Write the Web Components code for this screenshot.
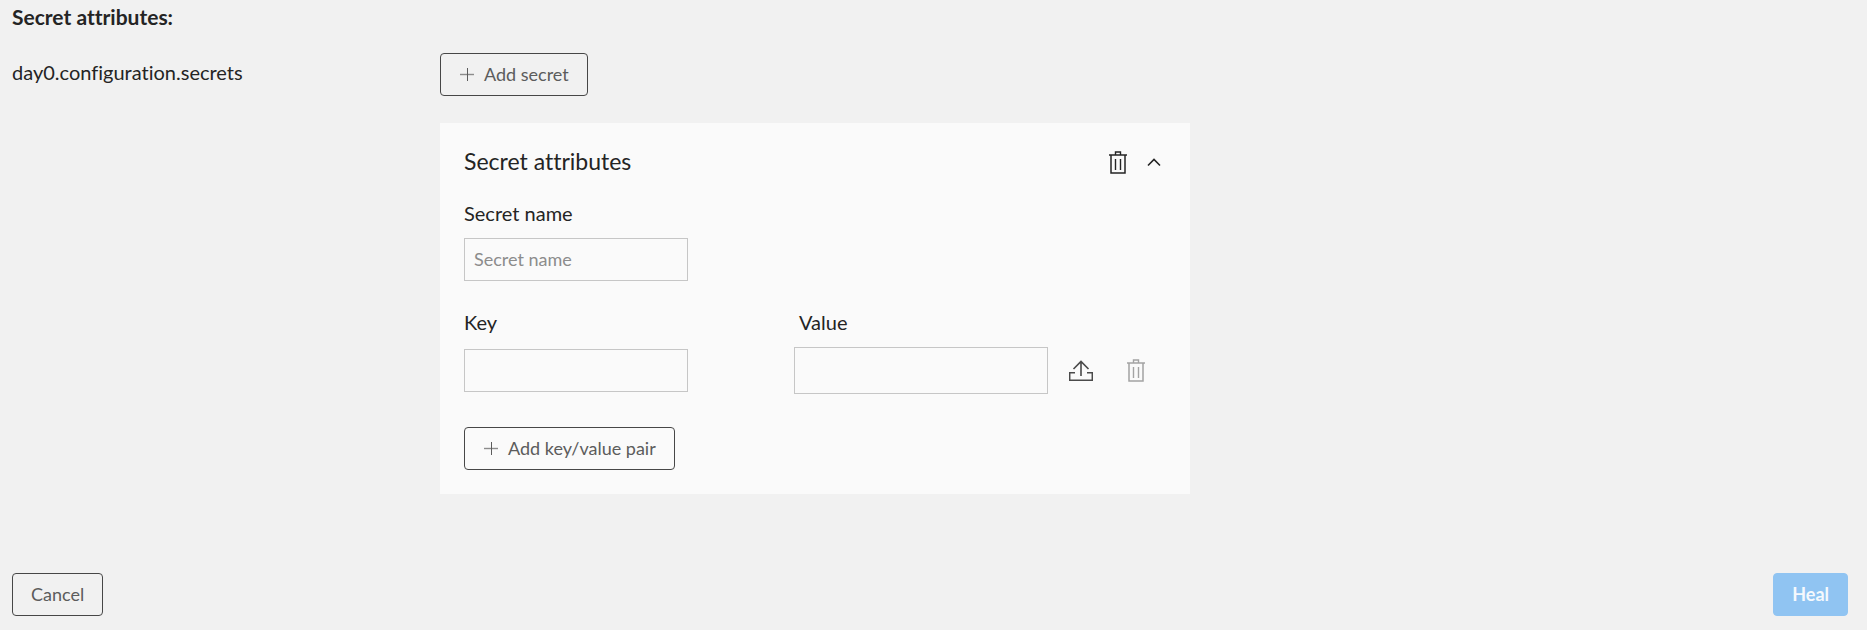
<!DOCTYPE html>
<html lang="en">
<head>
<meta charset="utf-8">
<meta name="viewport" content="width=device-width, initial-scale=1">
<title>Heal – Secret attributes</title>
<style>
  body { margin: 0; background: #f1f1f1; color: #242424; font: 20px/24px Lato, "Open Sans", sans-serif; font-variant-ligatures: none; }
</style>
</head>
<body>
<heal-page></heal-page>
<script>
const define = (name, html, setup) => {
  const template = document.createElement('template');
  template.innerHTML = html;
  customElements.define(name, class extends HTMLElement {
    constructor() {
      super();
      this.attachShadow({ mode: 'open' }).append(template.content.cloneNode(true));
    }
    connectedCallback() { if (setup) setup(this, this.shadowRoot); }
  });
};

const icons = {
  plus: [16, 16, '<path d="M1 7.5h14" stroke="#8c8c8c" stroke-width="1.4"/><path d="M8.5 1v13"/>'],
  trash: [18, 23, '<path d="M0 4h18" stroke-width="1.5"/><path d="M6.5 4V1h5v3" stroke-width="1.4"/><path d="M2 4v18h14V4" stroke-width="1.5"/><path d="M6.5 8v11M11.5 8v11" stroke-width="1.4"/>'],
  up: [14, 9, '<path d="M1 7.500l6-6 6 6" stroke-width="1.6"/>'],
  upload: [24, 22, '<path d="M6 12.700H.7v7.600h22.600v-7.600H18" stroke-width="1.5"/><path d="M12 16V1M4.500 9L12 1.500 19.500 9" stroke-width="1.6"/>']
};

define('line-icon', `
<style>:host { display: inline-flex; flex: none; } svg { display: block; fill: none; stroke: currentColor; }</style>
<svg aria-hidden="true"></svg>`, (host, root) => {
  const [w, h, shape] = icons[host.getAttribute('name')];
  const svg = root.querySelector('svg');
  svg.setAttribute('viewBox', `0 0 ${w} ${h}`);
  svg.setAttribute('width', w);
  svg.setAttribute('height', h);
  svg.innerHTML = shape;
});

define('action-button', `
<style>
  :host { display: inline-block; }
  button { box-sizing: border-box; display: flex; align-items: center; gap: 9px; height: 43px; padding: 0 18px;
    border: 1px solid #474747; border-radius: 4px; background: transparent; color: #5c5c5c;
    font: inherit; font-variant-ligatures: none; font-size: 18px; line-height: 24px; white-space: nowrap; }
  span { padding-bottom: 2px; }
  :host([primary]) button { border-color: #90c4f2; background: #90c4f2; color: #f5f9fd; font-weight: 700; }
</style>
<button type="button"><slot name="icon"></slot><span><slot></slot></span></button>`,
(host, root) => { root.querySelector('button').disabled = host.hasAttribute('disabled'); });

define('icon-button', `
<style>
  :host { display: inline-flex; color: #242424; }
  :host([muted]) { color: #4a4a4a; }
  :host([disabled]) { color: #a3a3a3; }
  button { display: flex; padding: 0; border: 0; background: none; color: inherit; }
</style>
<button type="button"><slot></slot></button>`, (host, root) => {
  const button = root.querySelector('button');
  button.setAttribute('aria-label', host.getAttribute('label'));
  button.disabled = host.hasAttribute('disabled');
});

define('text-field', `
<style>
  :host { display: flex; flex-direction: column; gap: 13px; }
  input { box-sizing: border-box; width: 100%; max-width: 224px; height: 43px; padding: 0 9px 2px;
    border: 1px solid #c6c6c6; border-radius: 0; background: transparent; color: #242424;
    font: inherit; font-size: 18px; }
  input::placeholder { color: #8c8c8c; opacity: 1; }
  :host([large]) label { padding-left: 5px; }
  :host([large]) input { max-width: none; height: 47px; }
</style>
<label for="field"><slot></slot></label>
<input id="field" type="text">`, (host, root) => {
  root.querySelector('input').placeholder = host.getAttribute('placeholder') || '';
});

define('form-row', `
<style>
  :host { display: grid; grid-template-columns: minmax(0, 428px) minmax(0, 750px); padding: 0 12px; }
  .label { padding-top: 7px; }
  .content { display: flex; flex-direction: column; align-items: flex-start; gap: 27px; }
  ::slotted(secret-card) { width: 100%; }
</style>
<div class="label"><slot name="label"></slot></div>
<div class="content"><slot></slot></div>`);

define('key-value-row', `
<style>
  :host { display: grid; grid-template-columns: 330fr 254fr 118fr; }
  .key { gap: 15px; }
  .actions { display: flex; align-items: center; align-self: end; justify-content: space-between; height: 47px; padding: 0 21px; }
</style>
<text-field class="key">Key</text-field>
<text-field large>Value</text-field>
<div class="actions">
  <icon-button muted label="Upload value"><line-icon name="upload"></line-icon></icon-button>
  <icon-button disabled label="Delete pair"><line-icon name="trash"></line-icon></icon-button>
</div>`);

define('secret-card', `
<style>
  :host { box-sizing: border-box; display: flex; flex-direction: column; padding: 24px; background: #fafafa; }
  header { display: flex; align-items: center; justify-content: space-between; height: 30px; margin-bottom: 24px; }
  h2 { margin: 0; padding-bottom: 2px; font-size: 23px; line-height: 28px; font-weight: 400; }
  .tools { display: flex; align-items: center; gap: 20px; padding-right: 5px; }
  key-value-row { margin: 29px 0 33px; }
</style>
<header>
  <h2><slot></slot></h2>
  <div class="tools">
    <icon-button label="Delete secret"><line-icon name="trash"></line-icon></icon-button>
    <icon-button label="Collapse"><line-icon name="up"></line-icon></icon-button>
  </div>
</header>
<text-field placeholder="Secret name">Secret name</text-field>
<key-value-row></key-value-row>
<div><action-button><line-icon slot="icon" name="plus"></line-icon>Add key/value pair</action-button></div>`);

define('action-bar', `
<style>:host { display: flex; justify-content: space-between; padding: 24px 19px 14px 12px; }</style>
<slot></slot>`);

define('heal-page', `
<style>
  :host { box-sizing: border-box; display: flex; flex-direction: column; min-height: 100vh; padding-top: 5px; }
  h1 { margin: 0 12px 24px; font-size: 21px; line-height: 24px; font-weight: 700; }
  action-bar { margin-top: auto; }
</style>
<h1>Secret attributes:</h1>
<form-row>
  <span slot="label">day0.configuration.secrets</span>
  <action-button><line-icon slot="icon" name="plus"></line-icon>Add secret</action-button>
  <secret-card>Secret attributes</secret-card>
</form-row>
<action-bar>
  <action-button>Cancel</action-button>
  <action-button primary disabled>Heal</action-button>
</action-bar>`);
</script>
</body>
</html>
